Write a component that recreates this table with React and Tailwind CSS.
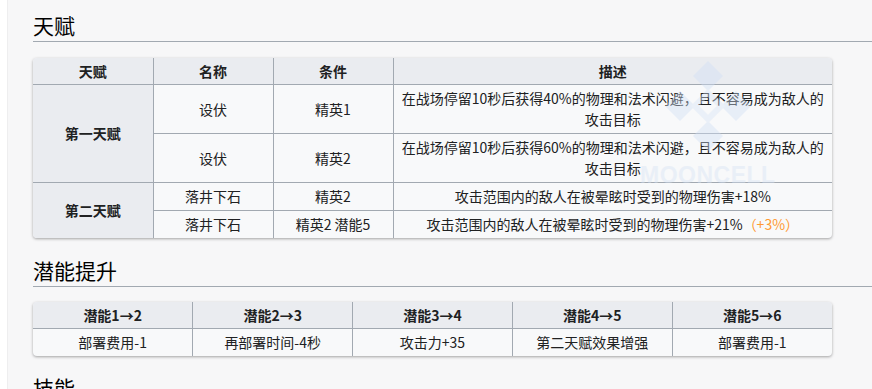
const talents = [
  { group: '第一天赋', rows: [
    { name: '设伏', cond: '精英1', desc: '在战场停留10秒后获得40%的物理和法术闪避，且不容易成为敌人的攻击目标' },
    { name: '设伏', cond: '精英2', desc: '在战场停留10秒后获得60%的物理和法术闪避，且不容易成为敌人的攻击目标' },
  ] },
  { group: '第二天赋', rows: [
    { name: '落井下石', cond: '精英2', desc: '攻击范围内的敌人在被晕眩时受到的物理伤害+18%' },
    { name: '落井下石', cond: '精英2 潜能5', desc: '攻击范围内的敌人在被晕眩时受到的物理伤害+21%', extra: '（+3%）' },
  ] },
];

const potentials = [
  ['潜能1→2', '部署费用-1'],
  ['潜能2→3', '再部署时间-4秒'],
  ['潜能3→4', '攻击力+35'],
  ['潜能4→5', '第二天赋效果增强'],
  ['潜能5→6', '部署费用-1'],
];

const th = 'border border-[#a2a9b1] bg-[#eaecf0] font-bold text-center leading-[20px] py-[3px] px-2';
const td = 'border border-[#a2a9b1] text-center leading-[21px] py-[3px] px-2';

function Heading({ children }) {
  return (
    <h2 className="pt-[14px] pb-[1px] text-[21px] leading-[26px] text-black border-b border-[#a2a9b1] font-['Liberation_Serif','Noto_Sans_CJK_SC',serif]">
      {children}
    </h2>
  );
}

function Watermark() {
  const d = (cx, cy, r) => `M${cx} ${cy - r}L${cx + r} ${cy}L${cx} ${cy + r}L${cx - r} ${cy}Z`;
  return (
    <div className="pointer-events-none absolute left-[640px] top-[56px] flex flex-col items-center opacity-40">
      <svg width="130" height="108" viewBox="0 0 130 108">
        <g fill="#cfdff5">
          <path d={d(65, 20, 15)} />
          <path d={d(37, 50, 15)} />
          <path d={d(93, 50, 15)} />
          <path d={d(65, 80, 15)} />
        </g>
        <g fill="none" stroke="#d7e4f6" strokeWidth="6">
          <path d={d(65, 50, 13)} />
        </g>
      </svg>
      <div className="text-[23px] leading-[22px] font-bold tracking-[0.5px] text-[#d5e2f4] font-['Liberation_Sans',sans-serif]">MOONCELL</div>
    </div>
  );
}

export default function App() {
  return (
    <div className="relative flex w-[872px] h-[389px] overflow-hidden text-[14px] text-[#202122] font-['Noto_Sans_CJK_SC',sans-serif]">
      <div className="w-[8px] shrink-0 bg-white border-r border-[#eeeeef]" />
      <main className="flex-1 bg-[#f7f7f8] pl-[25px]">
        <Heading>天赋</Heading>
        <div className="mt-[16px] w-[799px] rounded-[4px] overflow-hidden shadow-[0_1px_3px_rgba(0,0,0,0.35)] bg-[#f8f9fa]">
          <table className="w-full table-fixed border-collapse border-hidden">
            <colgroup>
              <col className="w-[120px]" />
              <col className="w-[120px]" />
              <col className="w-[120px]" />
              <col />
            </colgroup>
            <thead>
              <tr>
                <th className={th}>天赋</th>
                <th className={th}>名称</th>
                <th className={th}>条件</th>
                <th className={th}>描述</th>
              </tr>
            </thead>
            <tbody>
              {talents.map((t) =>
                t.rows.map((r, i) => (
                  <tr key={t.group + i}>
                    {i === 0 && (
                      <td rowSpan={t.rows.length} className={`${td} bg-[#eaecf0] font-bold`}>{t.group}</td>
                    )}
                    <td className={td}>{r.name}</td>
                    <td className={td}>{r.cond}</td>
                    <td className={td}>
                      {r.desc}
                      {r.extra && <span className="text-[#ff9a33]">{r.extra}</span>}
                    </td>
                  </tr>
                ))
              )}
            </tbody>
          </table>
        </div>

        <div className="mt-[7px]">
          <Heading>潜能提升</Heading>
        </div>
        <div className="mt-[15px] w-[799px] rounded-[4px] overflow-hidden shadow-[0_1px_3px_rgba(0,0,0,0.35)] bg-[#f8f9fa]">
          <table className="w-full table-fixed border-collapse border-hidden">
            <thead>
              <tr>
                {potentials.map(([h]) => (
                  <th key={h} className={th}>{h}</th>
                ))}
              </tr>
            </thead>
            <tbody>
              <tr>
                {potentials.map(([h, v]) => (
                  <td key={h} className={td}>{v}</td>
                ))}
              </tr>
            </tbody>
          </table>
        </div>

        <div className="mt-[6px]">
          <Heading>技能</Heading>
        </div>
      </main>
      <Watermark />
    </div>
  );
}
